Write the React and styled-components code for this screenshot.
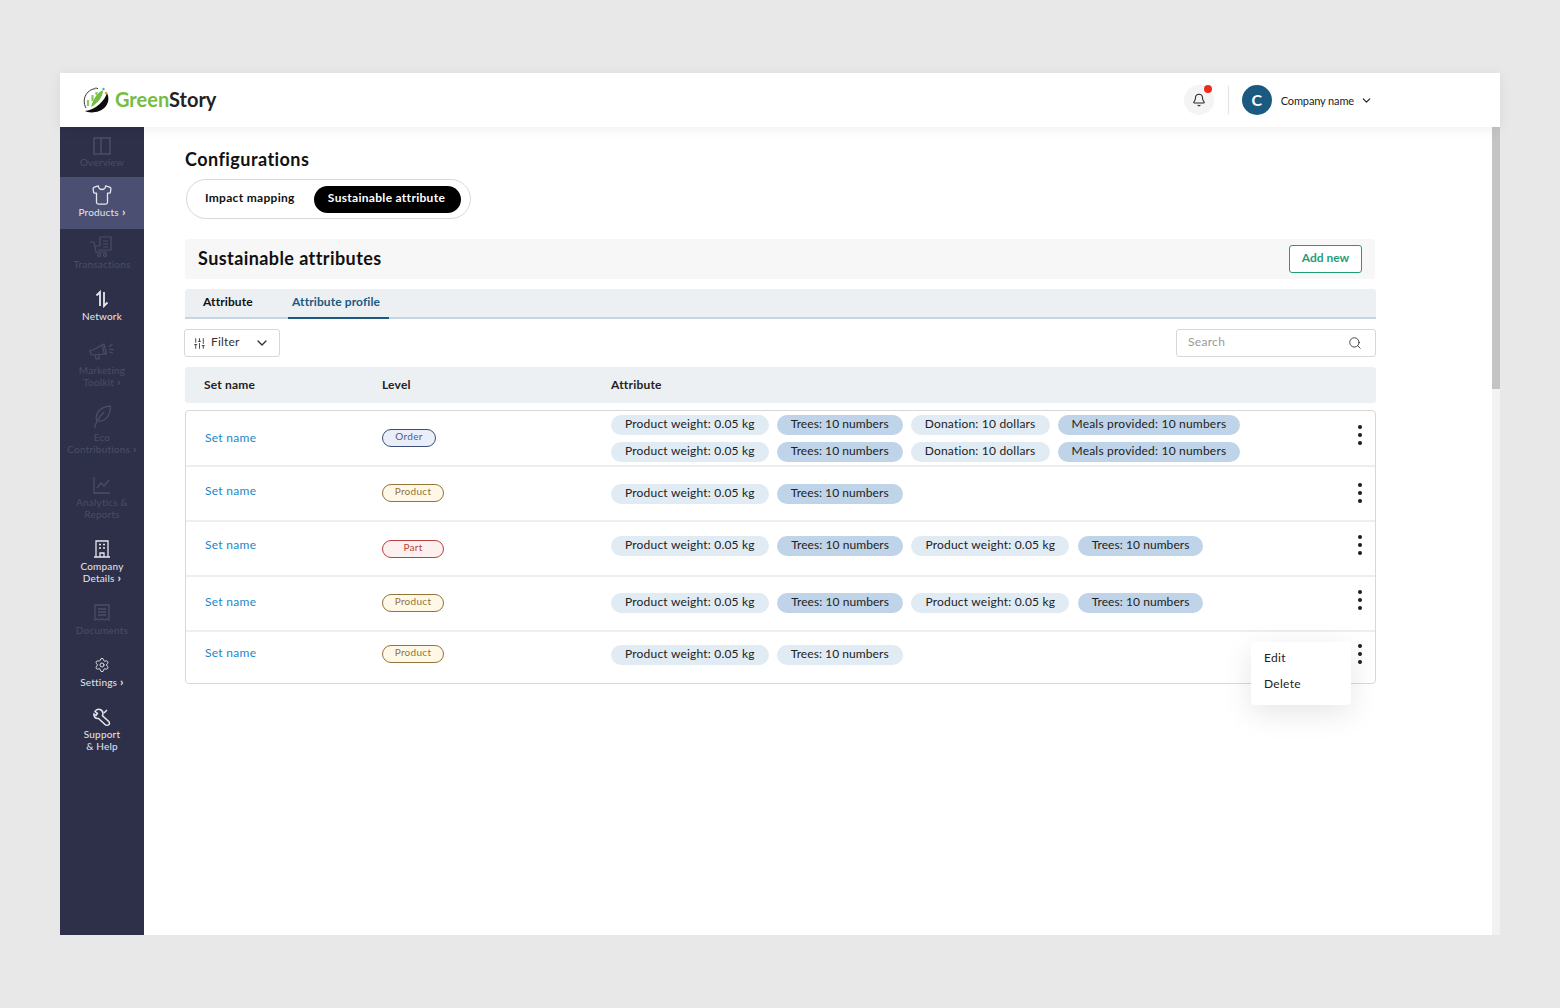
import styled, { createGlobalStyle } from 'styled-components';
import { Bell, ChevronDown, Search as SearchIcon, SlidersVertical, Shirt, Settings } from 'lucide-react';

const GlobalStyle = createGlobalStyle`
  * { box-sizing: border-box; }
  html, body { margin: 0; padding: 0; }
  body {
    background: #e8e8e8;
    font-family: 'Lato', 'Liberation Sans', sans-serif;
    color: #1c1c1c;
  }
`;

const Logo = () => (
  <LogoWrap>
    <svg width="28" height="28" viewBox="0 0 28 28" fill="none">
      <path d="M4 22C-1 13 5 2 16 2.500" stroke="#333" strokeWidth="1" />
      <path d="M3 25C6 27 18 28 24 20C27 16 27 11 25 7C23 14 14 24 3 25Z" fill="#0c0c0c" />
      <path d="M9 21C15 18 21 11 21 4C15 7 11 13 9 21Z" fill="#76bc43" />
      <path d="M6 20V14M10.500 15V9M14.500 9V6" stroke="#8cc866" strokeWidth="2.200" />
      <circle cx="24" cy="7" r="1.300" fill="#f59a23" />
      <circle cx="21.500" cy="3" r="1.200" fill="#3fa9dc" />
      <circle cx="14" cy="2" r="1" fill="#8cc866" />
    </svg>
    <LogoText>Green<b>Story</b></LogoText>
  </LogoWrap>
);

const sideIcons = {
  panel: (
    <svg width="18" height="18" viewBox="0 0 18 18" fill="none" stroke="currentColor" strokeWidth="1.500">
      <rect x="1" y="1" width="16" height="16" />
      <path d="M8 1v16" />
    </svg>
  ),
  cart: (
    <svg width="26" height="22" viewBox="0 0 26 22" fill="none" stroke="currentColor" strokeWidth="1.200">
      <path d="M11 10V1h11v13H9" />
      <path d="M14 5h5M14 8h5M14 11h5M1 6h4l2 10h11M6 10h5" />
      <circle cx="10" cy="19" r="1.500" />
      <circle cx="16" cy="19" r="1.500" />
    </svg>
  ),
  network: (
    <svg width="14" height="18" viewBox="0 0 14 18" fill="none" stroke="currentColor" strokeWidth="1.800">
      <path d="M5 16V2L1.500 5.500M9 2v14l3.500-3.500" />
    </svg>
  ),
  megaphone: (
    <svg width="26" height="20" viewBox="0 0 26 20" fill="none" stroke="currentColor" strokeWidth="1.200">
      <path d="M1 9.500l3-.5 11-6 2.500 10L5 14l-3-.5zM6 14l1 4h3.500l-1-4.500M13 3.500l2.500 10M20 6l3.500-3M20.500 8.500h4.500M20.500 11l3.500 1" />
    </svg>
  ),
  leaf: (
    <svg width="18" height="24" viewBox="0 0 18 24" fill="none" stroke="currentColor" strokeWidth="1.300">
      <path d="M4 16C1 9 7 2 17 1c1 8-3 16-13 15zM1.500 23c1.500-6 4.500-11 9.500-16" />
    </svg>
  ),
  chart: (
    <svg width="18" height="18" viewBox="0 0 18 18" fill="none" stroke="currentColor" strokeWidth="1.300">
      <path d="M1 1v16h16M4 12l4-5 3 3 5-6" />
    </svg>
  ),
  building: (
    <svg width="16" height="18" viewBox="0 0 16 18" fill="none" stroke="currentColor" strokeWidth="1.300">
      <path d="M2 17V1h12v16M0 17h16M6 17v-4h4v4M5 4.500h2M9 4.500h2M5 8h2M9 8h2" />
    </svg>
  ),
  doc: (
    <svg width="16" height="18" viewBox="0 0 16 18" fill="none" stroke="currentColor" strokeWidth="1.300">
      <path d="M1 1h14v15l-2.300-1-2.300 1-2.400-1-2.400 1-2.300-1L1 16zM4 5h8M4 8h8M4 11h8" />
    </svg>
  ),
  wrench: (
    <svg width="18" height="18" viewBox="0 0 18 18" fill="none" stroke="currentColor" strokeWidth="1.500">
      <path d="M7 1.500C4.500 1 2.800 2 2 3.500l2.500 2-1.500 2L1 6c-.5 2.500 1.500 5 4.500 4.500l6.500 6c1 1 3 1 4 0 .6-.8.6-1.800 0-2.700l-6.500-6C10.500 5 9.500 2.500 7 1.500z" />
      <path d="M11 5l3-3" />
    </svg>
  ),
};

const navItems = [
  { icon: sideIcons.panel, lines: ['Overview'], dim: true, first: true },
  { icon: <Shirt size={22} strokeWidth={1.4} />, lines: ['Products'], more: true, active: true },
  { icon: sideIcons.cart, lines: ['Transactions'], dim: true },
  { icon: sideIcons.network, lines: ['Network'] },
  { icon: sideIcons.megaphone, lines: ['Marketing', 'Toolkit'], more: true, dim: true, gap: 3 },
  { icon: sideIcons.leaf, lines: ['Eco', 'Contributions'], more: true, dim: true, gap: 4, after: 1 },
  { icon: sideIcons.chart, lines: ['Analytics &', 'Reports'], dim: true },
  { icon: sideIcons.building, lines: ['Company', 'Details'], more: true },
  { icon: sideIcons.doc, lines: ['Documents'], dim: true },
  { icon: <Settings size={16} strokeWidth={1.4} />, lines: ['Settings'], more: true },
  { icon: sideIcons.wrench, lines: ['Support', '& Help'] },
];

const P = { text: 'Product weight: 0.05 kg' };
const T = { text: 'Trees: 10 numbers', dark: true, tight: true };
const D = { text: 'Donation: 10 dollars' };
const M = { text: 'Meals provided: 10 numbers', dark: true };
const TL = { text: 'Trees: 10 numbers', tight: true };

// top offsets of each cell inside its row
const rows = [
  { level: 'Order', chips: [P, T, D, M, P, T, D, M], height: 54, top: { name: 20, badge: 18, chips: 4, kebab: 14 } },
  { level: 'Product', chips: [P, T], height: 53, top: { name: 17, badge: 17, chips: 17, kebab: 16 } },
  { level: 'Part', chips: [P, T, P, T], gap: 8.4, height: 53, top: { name: 16, badge: 18, chips: 14, kebab: 13 } },
  { level: 'Product', chips: [P, T, P, T], gap: 8.4, height: 53, top: { name: 18, badge: 17, chips: 16, kebab: 13 } },
  { level: 'Product', chips: [P, TL], height: 51, top: { name: 14, badge: 13, chips: 13, kebab: 12 }, menu: true },
];

const App = () => (
  <>
    <GlobalStyle />
    <Page>
      <Frame>
        <Header>
          <Logo />
          <HeaderRight>
            <BellButton>
              <Bell size={14} strokeWidth={1.8} />
              <BellDot />
            </BellButton>
            <Divider />
            <Avatar>C</Avatar>
            <CompanyName>Company name</CompanyName>
            <ChevronDown size={13} strokeWidth={2.2} />
          </HeaderRight>
        </Header>
        <Body>
          <Sidebar>
            {navItems.map((item) => (
              <NavItem key={item.lines[0]} $active={item.active} $dim={item.dim} $first={item.first} $after={item.after}>
                <NavIcon>{item.icon}</NavIcon>
                <NavLabel $gap={item.first ? 0 : item.gap}>
                  {item.lines.map((l, i) => (
                    <span key={l}>
                      {l}
                      {item.more && i === item.lines.length - 1 && <NavMore>›</NavMore>}
                    </span>
                  ))}
                </NavLabel>
              </NavItem>
            ))}
          </Sidebar>
          <Main>
            <PageTitle>Configurations</PageTitle>
            <Segment>
              <SegmentItem>Impact mapping</SegmentItem>
              <SegmentItem $active>Sustainable attribute</SegmentItem>
            </Segment>
            <SectionBar>
              <SectionTitle>Sustainable attributes</SectionTitle>
              <AddButton>Add new</AddButton>
            </SectionBar>
            <Tabs>
              <Tab>Attribute</Tab>
              <Tab $active>Attribute profile</Tab>
            </Tabs>
            <Toolbar>
              <FilterButton>
                <SlidersVertical size={13} strokeWidth={1.6} />
                <span>Filter</span>
                <ChevronDown size={16} strokeWidth={2} />
              </FilterButton>
              <SearchBox>
                <span>Search</span>
                <SearchIcon size={14} strokeWidth={1.5} />
              </SearchBox>
            </Toolbar>
            <TableHead>
              <span>Set name</span>
              <span>Level</span>
              <span>Attribute</span>
            </TableHead>
            <TableBody>
              {rows.map((row, i) => (
                <Row key={i} $height={row.height}>
                  <SetName $top={row.top.name}>Set name</SetName>
                  <LevelCell $top={row.top.badge}>
                    <LevelBadge $level={row.level}>{row.level}</LevelBadge>
                  </LevelCell>
                  <Chips $top={row.top.chips} $gap={row.gap}>
                    {row.chips.map((chip, j) => (
                      <Chip key={j} $dark={chip.dark} $tight={chip.tight}>{chip.text}</Chip>
                    ))}
                  </Chips>
                  <Kebab $top={row.top.kebab}>
                    <svg width="4" height="20" viewBox="0 0 4 20" fill="#1c1c1c">
                      <circle cx="2" cy="2" r="2" />
                      <circle cx="2" cy="10" r="2" />
                      <circle cx="2" cy="18" r="2" />
                    </svg>
                  </Kebab>
                  {row.menu && (
                    <Menu>
                      <MenuItem>Edit</MenuItem>
                      <MenuItem>Delete</MenuItem>
                    </Menu>
                  )}
                </Row>
              ))}
            </TableBody>
          </Main>
          <ScrollTrack>
            <ScrollThumb />
          </ScrollTrack>
        </Body>
      </Frame>
    </Page>
  </>
);

const Page = styled.div`
  width: 1560px;
  height: 1008px;
  padding: 73px 60px;
  overflow: hidden;
`;

const Frame = styled.div`
  width: 1440px;
  height: 862px;
  background: #fff;
  display: flex;
  flex-direction: column;
`;

const Header = styled.header`
  position: relative;
  z-index: 2;
  height: 54px;
  flex: none;
  background: #fff;
  box-shadow: 0 2px 12px rgba(0, 0, 0, 0.07);
  display: flex;
  align-items: center;
  justify-content: space-between;
  padding: 0 127px 0 22px;
`;

const LogoWrap = styled.div`
  display: flex;
  align-items: center;
  gap: 5px;
`;

const LogoText = styled.div`
  font-size: 20px;
  line-height: 22px;
  padding-bottom: 2px;
  font-weight: 700;
  color: #76bc43;
  b {
    color: #222;
    font-weight: 700;
  }
`;

const HeaderRight = styled.div`
  display: flex;
  align-items: center;
  color: #222;
`;

const BellButton = styled.div`
  position: relative;
  width: 30px;
  height: 30px;
  border-radius: 50%;
  background: #f4f4f4;
  display: flex;
  align-items: center;
  justify-content: center;
`;

const BellDot = styled.div`
  position: absolute;
  top: 0;
  right: 2px;
  width: 8px;
  height: 8px;
  border-radius: 50%;
  background: #ee2a1b;
`;

const Divider = styled.div`
  width: 1px;
  height: 28px;
  background: #e2e2e2;
  margin: 0 13px 0 14px;
`;

const Avatar = styled.div`
  width: 30px;
  height: 30px;
  padding-bottom: 2px;
  border-radius: 50%;
  background: #1a5a80;
  color: #fff;
  font-size: 16px;
  font-weight: 700;
  display: flex;
  align-items: center;
  justify-content: center;
`;

const CompanyName = styled.span`
  font-size: 11px;
  margin: 0 6px 0 9px;
  letter-spacing: -0.13px;
`;

const Body = styled.div`
  flex: 1;
  display: flex;
  min-height: 0;
`;

const Sidebar = styled.nav`
  width: 84px;
  flex: none;
  background: #2e3049;
`;

const NavItem = styled.div`
  display: flex;
  flex-direction: column;
  align-items: center;
  padding: ${(p) => (p.$first ? '9px 0 9px' : `8px 0 ${11 + (p.$after || 0)}px`)};
  background: ${(p) => (p.$active ? '#4b4f72' : 'transparent')};
  color: ${(p) => (p.$dim ? '#4a4d66' : '#e6e7ee')};
`;

const NavIcon = styled.div`
  height: 20px;
  display: flex;
  align-items: center;
  justify-content: center;
`;

const NavLabel = styled.div`
  margin-top: ${(p) => (p.$gap ?? 1)}px;
  font-size: 10px;
  line-height: 12px;
  letter-spacing: 0.2px;
  text-align: center;
  span {
    display: block;
    white-space: nowrap;
  }
`;

const NavMore = styled.i`
  font-style: normal;
  font-size: 12px;
  font-weight: 700;
  margin-left: 3px;
`;

const Main = styled.main`
  flex: 1;
  padding: 21px 116px 0 41px;
  min-width: 0;
`;

const PageTitle = styled.h1`
  margin: 0;
  font-size: 18px;
  line-height: 22px;
  font-weight: 700;
  letter-spacing: 0.45px;
  color: #111;
`;

const Segment = styled.div`
  width: 285px;
  height: 40px;
  margin: 9px 0 20px 1px;
  padding: 0 9px 4px 18px;
  border: 1px solid #d8d8d8;
  border-radius: 20px;
  display: flex;
  align-items: center;
  justify-content: space-between;
`;

const SegmentItem = styled.div`
  font-size: 12px;
  font-weight: 700;
  letter-spacing: 0.3px;
  color: ${(p) => (p.$active ? '#fff' : '#111')};
  ${(p) => p.$active && `
    background: #000;
    height: 27px;
    width: 147px;
    margin-bottom: -4px;
    padding: 0 2px 3px 0;
    border-radius: 14px;
    display: flex;
    align-items: center;
    justify-content: center;
  `}
`;

const SectionBar = styled.div`
  height: 40px;
  background: #f7f7f7;
  border-radius: 3px;
  display: flex;
  align-items: center;
  justify-content: space-between;
  padding: 0 13px;
  width: 1190px;
`;

const SectionTitle = styled.h2`
  margin: 0 0 2px;
  font-size: 18px;
  font-weight: 700;
  letter-spacing: 0.42px;
  color: #111;
`;

const AddButton = styled.button`
  width: 73px;
  height: 28px;
  border: 1px solid #1f9d78;
  border-radius: 3px;
  background: #fff;
  color: #1f9d78;
  font-family: inherit;
  font-size: 12px;
  font-weight: 700;
  padding: 0 0 4px;
`;

const Tabs = styled.div`
  margin-top: 10px;
  height: 30px;
  background: #ecf0f3;
  border-bottom: 2px solid #c5d5e3;
  border-radius: 3px 3px 0 0;
  display: flex;
`;

const Tab = styled.div`
  height: 30px;
  padding: 0 0 4px ${(p) => (p.$active ? '4px' : '18px')};
  width: ${(p) => (p.$active ? '101px' : '103px')};
  display: flex;
  align-items: center;
  font-size: 12px;
  font-weight: 700;
  letter-spacing: 0.1px;
  color: ${(p) => (p.$active ? '#1a5a80' : '#111')};
  border-bottom: 2px solid ${(p) => (p.$active ? '#1a5a80' : 'transparent')};
`;

const Toolbar = styled.div`
  margin-top: 10px;
  display: flex;
  justify-content: space-between;
`;

const FilterButton = styled.div`
  width: 96px;
  height: 28px;
  margin-left: -1px;
  border: 1px solid #d8d8d8;
  border-radius: 3px;
  display: flex;
  align-items: center;
  padding: 0 9px 0 8px;
  font-size: 12px;
  color: #333;
  letter-spacing: 0.2px;
  span {
    margin: 0 0 4px 5px;
    flex: 1;
  }
`;

const SearchBox = styled.div`
  width: 200px;
  height: 28px;
  border: 1px solid #d8d8d8;
  border-radius: 3px;
  display: flex;
  align-items: center;
  justify-content: space-between;
  padding: 0 13px 0 11px;
  font-size: 12px;
  color: #999;
  letter-spacing: 0.3px;
  span {
    margin-bottom: 4px;
  }
  svg {
    color: #333;
  }
`;

const TableHead = styled.div`
  margin-top: 10px;
  height: 36px;
  background: #ecf0f3;
  border-radius: 3px;
  display: grid;
  grid-template-columns: 178px 229px 1fr;
  padding: 0 0 2px 19px;
  align-items: center;
  font-size: 12px;
  font-weight: 700;
  color: #222;
  letter-spacing: 0.2px;
`;

const TableBody = styled.div`
  margin-top: 7px;
  border: 1px solid #d8d8d8;
  border-radius: 4px;
`;

const Row = styled.div`
  position: relative;
  height: ${(p) => p.$height}px;
  display: grid;
  grid-template-columns: 177px 229px 1fr 30px;
  align-items: start;
  padding-left: 19px;
  &:not(:last-child) {
    box-sizing: content-box;
    border-bottom: 2px solid #eeeeee;
  }
`;

const SetName = styled.span`
  margin-top: ${(p) => p.$top}px;
  font-size: 12px;
  line-height: 14px;
  color: #1b87c9;
  letter-spacing: 0.3px;
`;

const levelColors = {
  Order: { bg: '#e9eef8', line: '#3c4f7c', text: '#4d5c85', width: 54 },
  Product: { bg: '#fff8e6', line: '#92743a', text: '#92743a', width: 62 },
  Part: { bg: '#fff0f0', line: '#b8423f', text: '#b8423f', width: 62 },
};

const LevelCell = styled.div`
  margin-top: ${(p) => p.$top}px;
  display: flex;
`;

const LevelBadge = styled.span`
  display: inline-flex;
  align-items: center;
  justify-content: center;
  width: ${(p) => levelColors[p.$level].width}px;
  height: 18px;
  padding-bottom: 4px;
  border-radius: 9px;
  font-size: 10px;
  letter-spacing: 0.3px;
  background: ${(p) => levelColors[p.$level].bg};
  border: 1px solid ${(p) => levelColors[p.$level].line};
  color: ${(p) => levelColors[p.$level].text};
`;

const Chips = styled.div`
  margin-top: ${(p) => p.$top}px;
  display: flex;
  flex-wrap: wrap;
  gap: 7px ${(p) => p.$gap || 8}px;
`;

const Chip = styled.span`
  height: 20px;
  padding: 0 14px 3px;
  border-radius: 10px;
  background: ${(p) => (p.$dark ? '#bfd4e8' : '#e1ebf4')};
  font-size: 12px;
  letter-spacing: ${(p) => (p.$tight ? '0.07px' : '0.2px')};
  color: #222;
  display: inline-flex;
  align-items: center;
  white-space: nowrap;
`;

const Kebab = styled.div`
  margin-top: ${(p) => p.$top}px;
  display: flex;
  justify-content: center;
  padding-right: 1px;
`;

const Menu = styled.div`
  position: absolute;
  right: 24px;
  top: 10px;
  width: 100px;
  height: 63px;
  background: #fff;
  border-radius: 4px;
  box-shadow: 0 8px 30px rgba(0, 0, 0, 0.1);
  padding: 2px 13px;
  z-index: 3;
`;

const MenuItem = styled.div`
  height: 26px;
  display: flex;
  align-items: center;
  font-size: 12px;
  letter-spacing: 0.3px;
  color: #222;
`;

const ScrollTrack = styled.div`
  width: 8px;
  flex: none;
  background: #f2f2f2;
`;

const ScrollThumb = styled.div`
  height: 262px;
  background: #c4c4c4;
`;

export default App;
